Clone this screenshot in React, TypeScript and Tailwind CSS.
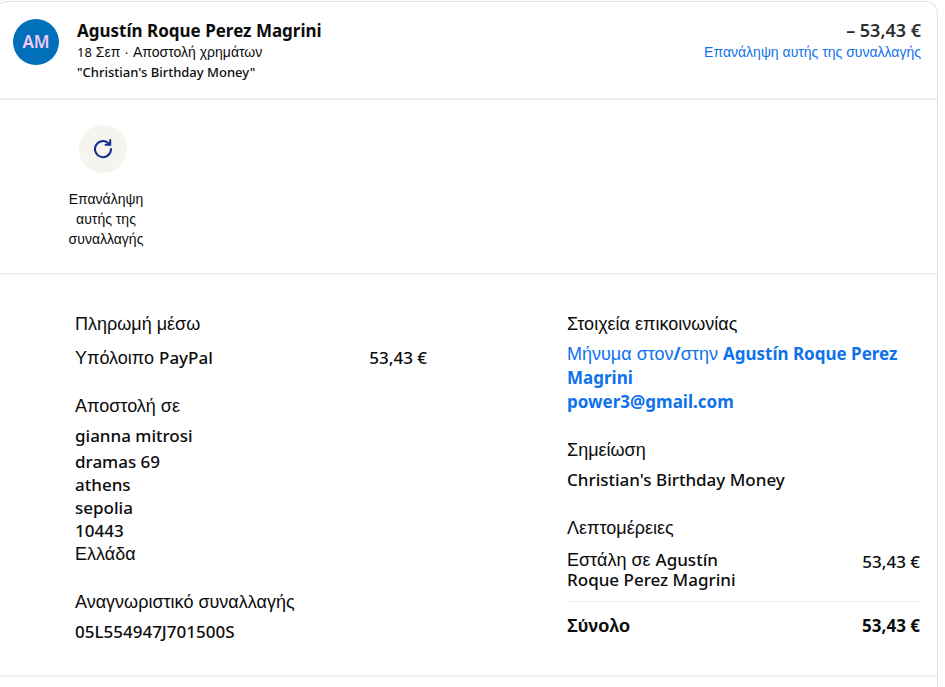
import type { ReactNode } from "react";

const latin = "font-['Noto_Sans','Open_Sans',sans-serif]";

function Latin({ children, className = "" }: { children: ReactNode; className?: string }) {
  return <span className={`${latin} ${className}`}>{children}</span>;
}

function Section({ title, children }: { title: string; children: ReactNode }) {
  return (
    <section>
      <h2 className="text-lg leading-6">{title}</h2>
      {children}
    </section>
  );
}

function RepeatIcon() {
  return (
    <svg width="24" height="24" viewBox="0 0 24 24" fill="none" stroke="#142c8e" strokeWidth="2" aria-hidden="true">
      <path d="M20 12A8 8 0 1 1 17.4 6.2L18.4 7.2" strokeLinecap="round" />
      <path d="M19.2 3V7.8H14.6" strokeLinecap="round" strokeLinejoin="miter" />
    </svg>
  );
}

export default function App() {
  return (
    <main className="overflow-hidden bg-white pt-px font-['Liberation_Sans',Arial,sans-serif] text-[#0c0c0d]">
      <article className="-ml-[5px] mr-[7px] rounded-t-xl border border-b-0 border-[#e2e4e6] pb-6">
        <header className="flex h-[98px] items-start border-b-2 border-[#f0f0eb] pt-[17px] pr-4 pl-[17px]">
          <div className="flex size-[46px] shrink-0 items-center justify-center rounded-full bg-[#0070ba]">
            <Latin className="text-[17px] font-semibold text-[#f5c8f5]">AM</Latin>
          </div>
          <div className="ml-[18px] min-w-0 flex-1 text-sm leading-5">
            <h1 className={`${latin} text-[17px] leading-[23px] font-bold`}>Agustín Roque Perez Magrini</h1>
            <p className="flex gap-1">
              <span><Latin className="text-[13px]">18</Latin> Σεπ</span>
              <span aria-hidden="true">·</span>
              <span>Αποστολή χρημάτων</span>
            </p>
            <p className={`${latin} text-[13px] font-medium`}>"Christian's Birthday Money"</p>
          </div>
          <div className="text-right text-sm leading-5">
            <p className={`${latin} text-lg leading-[23px] font-semibold text-[#2c2e2f]`}>– 53,43 €</p>
            <a href="#repeat" className="text-[#1072eb]">Επανάληψη αυτής της συναλλαγής</a>
          </div>
        </header>

        <div className="border-b-2 border-[#f0f0eb] pt-[25px] pb-6 pl-[62px]">
          <button type="button" className="flex w-[90px] flex-col items-center gap-4 text-sm leading-5">
            <span className="flex size-12 items-center justify-center rounded-full bg-[#f5f4ef]">
              <RepeatIcon />
            </span>
            <span className="pl-1.5">Επανάληψη αυτής της συναλλαγής</span>
          </button>
        </div>

        <div className="flex justify-between border-b-2 border-[#f0f0eb] pt-[37px] pr-[17px] pb-[31px] pl-[79px] text-[17px] leading-6">
          <div className="flex w-[352px] flex-col gap-6">
            <Section title="Πληρωμή μέσω">
              <div className="flex justify-between pt-2.5">
                <span className="text-lg leading-6">Υπόλοιπο <Latin className="text-[17px] font-medium">PayPal</Latin></span>
                <Latin className="font-medium">53,43 €</Latin>
              </div>
            </Section>
            <Section title="Αποστολή σε">
              <address className={`${latin} pt-1.5 leading-[23px] font-medium not-italic`}>
                <p className="pb-0.5 leading-6">gianna mitrosi</p>
                <p>dramas 69</p>
                <p>athens</p>
                <p>sepolia</p>
                <p>10443</p>
                <p className="font-['Liberation_Sans',sans-serif] text-lg leading-6 font-normal">Ελλάδα</p>
              </address>
            </Section>
            <Section title="Αναγνωριστικό συναλλαγής">
              <p className={`${latin} pt-1.5 font-medium`}>05L554947J701500S</p>
            </Section>
          </div>

          <div className="flex w-[353px] flex-col gap-6">
            <Section title="Στοιχεία επικοινωνίας">
              <div className="pt-1.5 text-[#1072eb]">
                <a href="#message" className="block text-lg leading-6">
                  Μήνυμα στον<Latin className="text-[17px] font-bold">/</Latin>στην <Latin className="text-[17px] font-bold">Agustín Roque Perez Magrini</Latin>
                </a>
                <a href="mailto:power3@gmail.com" className={`${latin} block font-bold`}>power3@gmail.com</a>
              </div>
            </Section>
            <Section title="Σημείωση">
              <p className={`${latin} pt-1.5 font-medium`}>Christian's Birthday Money</p>
            </Section>
            <Section title="Λεπτομέρειες">
              <dl>
                <div className="flex items-start justify-between border-b border-[#ececec] pt-2.5 pb-[11px] leading-5">
                  <dt className="w-[180px] text-lg leading-5">
                    Εστάλη σε <Latin className="text-[17px] font-medium">Agustín Roque Perez Magrini</Latin>
                  </dt>
                  <dd className={`${latin} leading-6 font-medium`}>53,43 €</dd>
                </div>
                <div className="flex items-start justify-between pt-3 font-bold">
                  <dt className="text-lg leading-6">Σύνολο</dt>
                  <dd className={latin}>53,43 €</dd>
                </div>
              </dl>
            </Section>
          </div>
        </div>
      </article>
    </main>
  );
}
